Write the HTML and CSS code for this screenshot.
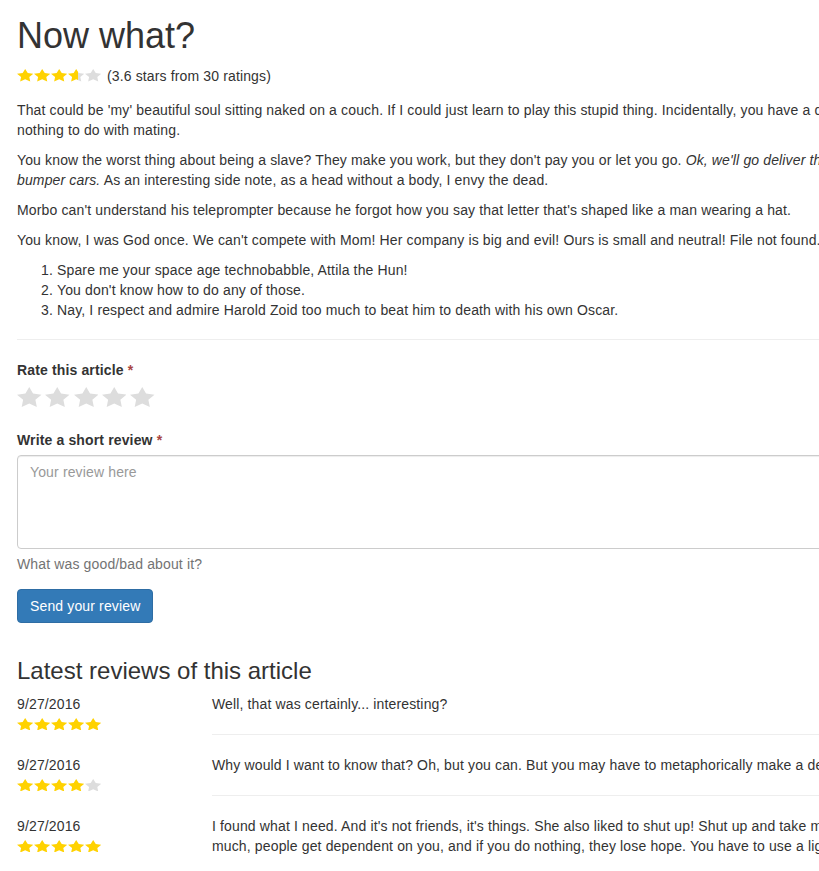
FILE: index.html
```html
<!DOCTYPE html>
<html lang="en">
<head>
<meta charset="utf-8">
<title>Now what?</title>
<link rel="stylesheet" href="styles.css">
</head>
<body>
<svg class="defs" width="0" height="0" aria-hidden="true">
  <defs>
    <polygon id="star" points="12,2 15.09,8.26 22,9.27 17,14.14 18.18,21.02 12,17.77 5.82,21.02 7,14.14 2,9.27 8.91,8.26"/>
    <linearGradient id="half">
      <stop offset="62%" stop-color="#ffd200"/>
      <stop offset="62%" stop-color="#dddddd"/>
    </linearGradient>
  </defs>
</svg>
<div class="page">
  <article class="article">
    <h1 class="title">Now what?</h1>
    <div class="summary">
      <span class="stars">
        <svg class="star on" viewBox="2 2 20 19.02" preserveAspectRatio="none"><use href="#star"/></svg>
        <svg class="star on" viewBox="2 2 20 19.02" preserveAspectRatio="none"><use href="#star"/></svg>
        <svg class="star on" viewBox="2 2 20 19.02" preserveAspectRatio="none"><use href="#star"/></svg>
        <svg class="star half" viewBox="2 2 20 19.02" preserveAspectRatio="none"><use href="#star"/></svg>
        <svg class="star off" viewBox="2 2 20 19.02" preserveAspectRatio="none"><use href="#star"/></svg>
      </span>
      <span class="summary-text">(3.6 stars from 30 ratings)</span>
    </div>
    <p>That could be 'my' beautiful soul sitting naked on a couch. If I could just learn to play this stupid thing. Incidentally, you have a dime up your nose. Something that has<br>nothing to do with mating.</p>
    <p>You know the worst thing about being a slave? They make you work, but they don't pay you or let you go. <em>Ok, we'll go deliver this crate, then ride the<br>bumper cars.</em> As an interesting side note, as a head without a body, I envy the dead.</p>
    <p>Morbo can't understand his teleprompter because he forgot how you say that letter that's shaped like a man wearing a hat.</p>
    <p>You know, I was God once. We can't compete with Mom! Her company is big and evil! Ours is small and neutral! File not found.</p>
    <ol class="list">
      <li>Spare me your space age technobabble, Attila the Hun!</li>
      <li>You don't know how to do any of those.</li>
      <li>Nay, I respect and admire Harold Zoid too much to beat him to death with his own Oscar.</li>
    </ol>
  </article>

  <hr class="divider">

  <form class="review-form">
    <div class="form-group">
      <label class="label">Rate this article <span class="req">*</span></label>
      <div class="rate">
        <svg class="rate-star" viewBox="2 2 20 19.02" preserveAspectRatio="none"><use href="#star"/></svg>
        <svg class="rate-star" viewBox="2 2 20 19.02" preserveAspectRatio="none"><use href="#star"/></svg>
        <svg class="rate-star" viewBox="2 2 20 19.02" preserveAspectRatio="none"><use href="#star"/></svg>
        <svg class="rate-star" viewBox="2 2 20 19.02" preserveAspectRatio="none"><use href="#star"/></svg>
        <svg class="rate-star" viewBox="2 2 20 19.02" preserveAspectRatio="none"><use href="#star"/></svg>
      </div>
    </div>
    <div class="form-group">
      <label class="label" for="review">Write a short review <span class="req">*</span></label>
      <textarea id="review" class="textarea" rows="4" placeholder="Your review here"></textarea>
      <div class="help">What was good/bad about it?</div>
    </div>
    <button type="button" class="btn">Send your review</button>
  </form>

  <h3 class="reviews-title">Latest reviews of this article</h3>

  <div class="review">
    <div class="review-meta">
      <div class="date">9/27/2016</div>
      <div class="stars small">
        <svg class="star on" viewBox="2 2 20 19.02" preserveAspectRatio="none"><use href="#star"/></svg>
        <svg class="star on" viewBox="2 2 20 19.02" preserveAspectRatio="none"><use href="#star"/></svg>
        <svg class="star on" viewBox="2 2 20 19.02" preserveAspectRatio="none"><use href="#star"/></svg>
        <svg class="star on" viewBox="2 2 20 19.02" preserveAspectRatio="none"><use href="#star"/></svg>
        <svg class="star on" viewBox="2 2 20 19.02" preserveAspectRatio="none"><use href="#star"/></svg>
      </div>
    </div>
    <div class="review-body">
      <p>Well, that was certainly... interesting?</p>
      <hr class="sep">
    </div>
  </div>

  <div class="review">
    <div class="review-meta">
      <div class="date">9/27/2016</div>
      <div class="stars small">
        <svg class="star on" viewBox="2 2 20 19.02" preserveAspectRatio="none"><use href="#star"/></svg>
        <svg class="star on" viewBox="2 2 20 19.02" preserveAspectRatio="none"><use href="#star"/></svg>
        <svg class="star on" viewBox="2 2 20 19.02" preserveAspectRatio="none"><use href="#star"/></svg>
        <svg class="star on" viewBox="2 2 20 19.02" preserveAspectRatio="none"><use href="#star"/></svg>
        <svg class="star off" viewBox="2 2 20 19.02" preserveAspectRatio="none"><use href="#star"/></svg>
      </div>
    </div>
    <div class="review-body">
      <p>Why would I want to know that? Oh, but you can. But you may have to metaphorically make a deal with the devil.</p>
      <hr class="sep">
    </div>
  </div>

  <div class="review">
    <div class="review-meta">
      <div class="date">9/27/2016</div>
      <div class="stars small">
        <svg class="star on" viewBox="2 2 20 19.02" preserveAspectRatio="none"><use href="#star"/></svg>
        <svg class="star on" viewBox="2 2 20 19.02" preserveAspectRatio="none"><use href="#star"/></svg>
        <svg class="star on" viewBox="2 2 20 19.02" preserveAspectRatio="none"><use href="#star"/></svg>
        <svg class="star on" viewBox="2 2 20 19.02" preserveAspectRatio="none"><use href="#star"/></svg>
        <svg class="star on" viewBox="2 2 20 19.02" preserveAspectRatio="none"><use href="#star"/></svg>
      </div>
    </div>
    <div class="review-body">
      <p>I found what I need. And it's not friends, it's things. She also liked to shut up! Shut up and take my money! If you do too<br>much, people get dependent on you, and if you do nothing, they lose hope. You have to use a light touch. Like a safecracker.</p>
    </div>
  </div>
</div>
</body>
</html>
```

FILE: styles.css
```css
html, body {
  overflow: hidden;
}
body {
  margin: 0;
  font-family: "Liberation Sans", Arial, Helvetica, sans-serif;
  font-size: 14px;
  line-height: 20px;
  letter-spacing: 0.14px;
  color: #333;
  background: #fff;
}
.defs {
  position: absolute;
  width: 0;
  height: 0;
}
.page {
  width: 1140px;
  padding: 16px 0 40px 17px;
}
.title {
  font-size: 36px;
  font-weight: 500;
  line-height: 1.1;
  letter-spacing: 0;
  margin: 0 0 10px;
}
.summary {
  display: flex;
  align-items: center;
  height: 20px;
  margin-bottom: 14px;
}
.stars {
  display: flex;
  align-items: center;
}
.star {
  width: 16.4px;
  height: 12.5px;
  margin-right: 0.6px;
  display: block;
}
.star.on { fill: #ffd200; }
.star.off { fill: #dddddd; }
.star.half { fill: url(#half); }
.summary-text {
  margin-left: 5px;
}
p {
  margin: 0 0 10px;
}
.list {
  margin: 0;
  padding-left: 40px;
}
.divider {
  border: 0;
  border-top: 1px solid #eee;
  margin: 19px 0 20px;
}
.form-group {
  margin-bottom: 15px;
}
.label {
  display: block;
  font-weight: 700;
  margin-bottom: 5px;
}
.req {
  color: #a94442;
}
.rate {
  display: flex;
  height: 28px;
  padding-top: 2px;
}
.rate-star {
  width: 24.5px;
  height: 20px;
  margin-right: 3.8px;
  fill: #dddddd;
  display: block;
}
.textarea {
  display: block;
  box-sizing: border-box;
  width: 100%;
  height: 94px;
  padding: 6px 12px;
  font-family: inherit;
  font-size: 14px;
  line-height: 20px;
  letter-spacing: 0.14px;
  color: #555;
  border: 1px solid #ccc;
  border-radius: 4px;
  box-shadow: inset 0 1px 1px rgba(0,0,0,.075);
  resize: vertical;
  margin: 0;
}
.textarea::placeholder {
  color: #999;
}
.help {
  color: #737373;
  margin-top: 5px;
}
.btn {
  display: block;
  margin-top: 1px;
  padding: 6px 12px;
  font-family: inherit;
  font-size: 14px;
  line-height: 20px;
  letter-spacing: 0.14px;
  color: #fff;
  background: #337ab7;
  border: 1px solid #2e6da4;
  border-radius: 4px;
  cursor: pointer;
}
.reviews-title {
  font-size: 24px;
  font-weight: 500;
  line-height: 1.1;
  letter-spacing: 0;
  margin: 35px 0 10px;
}
.review {
  display: flex;
}
.review-meta {
  width: 195px;
  flex: none;
}
.stars.small {
  height: 20px;
}
.review-body {
  width: 945px;
}
.sep {
  border: 0;
  border-top: 1px solid #eee;
  margin: 20px 0 20px;
}
```
